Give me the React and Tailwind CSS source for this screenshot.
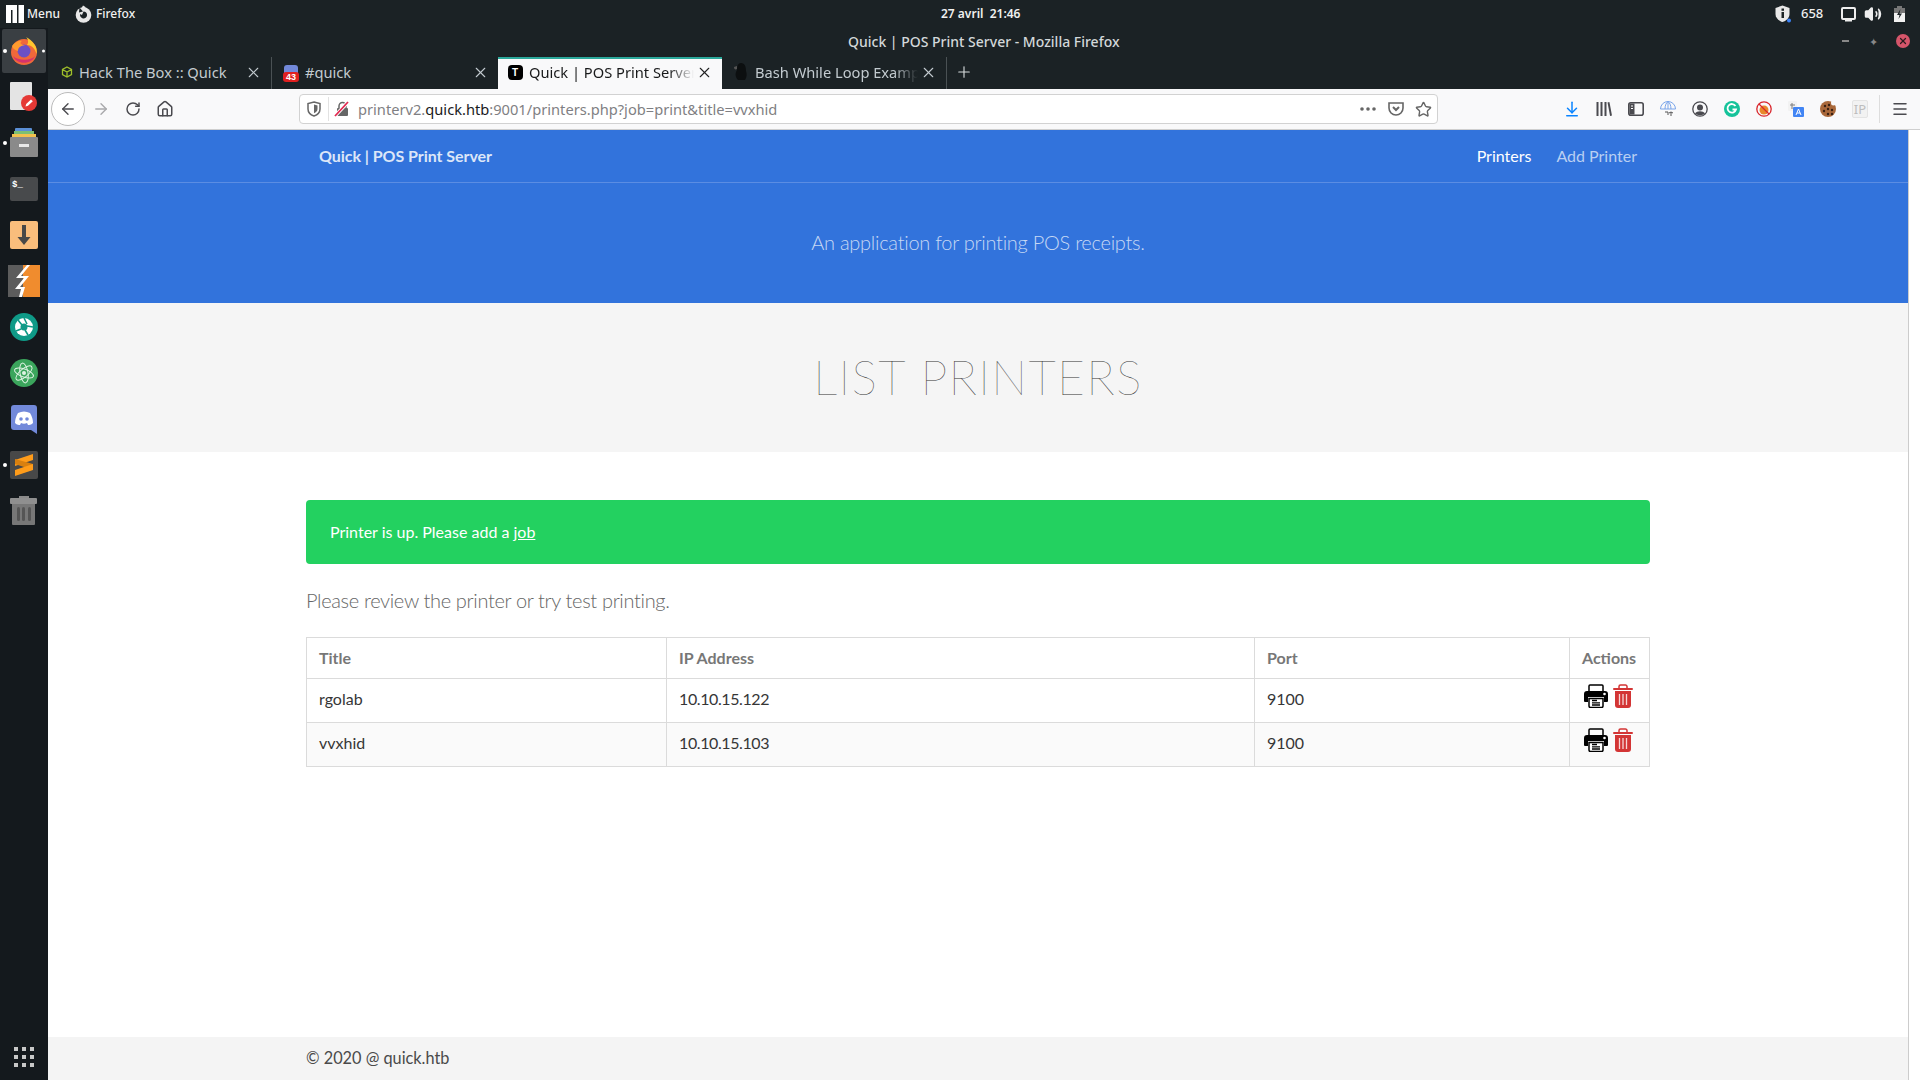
import React from 'react';
import { ArrowLeft, ArrowRight, RotateCw, Home, Star, X, Plus, Menu as MenuIcon, Volume2, ArrowDownToLine } from 'lucide-react';

// ---- desktop panel icons ----
const ManjaroLogo = () => (
  <svg width="18" height="18" viewBox="0 0 18 18" fill="#fff">
    <rect x="0" y="0" width="11" height="18" />
    <rect x="5" y="5" width="1.5" height="13" fill="#1b2225" />
    <rect x="11" y="0" width="1.5" height="18" fill="#1b2225" />
    <rect x="12.5" y="0" width="5.5" height="18" />
  </svg>
);

const FirefoxMono = () => (
  <svg width="17" height="18" viewBox="0 0 17 18">
    <circle cx="8.5" cy="10" r="7.8" fill="#e8e8e8" />
    <path d="M8 0.500 C12 2 11 5 9 6.500 L6 4 Z" fill="#e8e8e8" />
    <path d="M8.500 6.500 A3.500 3.500 0 1 1 5.200 9 L7 10 Z" fill="#1b2225" />
    <path d="M4.500 2.500 L8 6.500 L4 7.500 Z" fill="#1b2225" />
  </svg>
);

const ShieldInfo = () => (
  <svg width="16" height="18" viewBox="0 0 16 18">
    <path d="M7.500 0.500 L14.500 3 V9 C14.500 13 11 16 7.500 17 C4 16 0.500 13 0.500 9 V3 Z" fill="#e8e8e8" />
    <rect x="6.500" y="7" width="2.500" height="6" fill="#1b2225" />
    <rect x="6.500" y="3.500" width="2.500" height="2.300" fill="#1b2225" />
    <circle cx="14" cy="15.500" r="2" fill="#3b82f6" />
  </svg>
);

const MonitorIcon = () => (
  <svg width="15" height="15" viewBox="0 0 15 15" fill="none">
    <rect x="1" y="1" width="13" height="11" rx="1" stroke="#eee" strokeWidth="2" />
    <rect x="4" y="12.500" width="7" height="2" fill="#eee" />
  </svg>
);

const BatteryIcon = () => (
  <svg width="11" height="16" viewBox="0 0 11 16">
    <rect x="3" y="0" width="5" height="2" fill="#777" />
    <rect x="0" y="2" width="11" height="5" fill="#777" />
    <rect x="0" y="7" width="11" height="9" fill="#f2f2f2" />
    <path d="M6.500 3 L3 9 H5.500 L4.500 13 L8 7.500 H5.500 Z" fill="#1b2225" />
  </svg>
);

// ---- dock icons ----
const FirefoxDock = () => (
  <svg width="30" height="30" viewBox="0 0 30 30">
    <circle cx="15" cy="16" r="13" fill="#f0683a" />
    <path d="M4 20 C7 29 23 29 26 20 C22 25 9 25 4 20 Z" fill="#d6336c" />
    <path d="M17 1 C24 5 29 11 27.500 18 C26 12 22 9 18 9 C20 6 19 3 17 1 Z" fill="#ffc62e" />
    <circle cx="15" cy="15" r="6.500" fill="#6c50c4" />
    <path d="M3 10 C6 6 10 4 13 5 C10 7 12 9 16 9 C12 10 9 11 9 15 C6 14 4 13 3 10 Z" fill="#ff9b2e" />
  </svg>
);

const GeditIcon = () => (
  <svg width="28" height="30" viewBox="0 0 28 30">
    <rect x="0" y="0" width="22" height="28" rx="1" fill="#e4e4e4" />
    <circle cx="19" cy="21" r="8" fill="#e53935" />
    <path d="M15.500 24.500 L16.200 22 L21 17.500 L22.800 19.300 L18 23.800 Z" fill="#fff" />
  </svg>
);

const DrawerIcon = () => (
  <svg width="28" height="30" viewBox="0 0 28 30">
    <rect x="5" y="0" width="17" height="4" rx="1" fill="#5b8fd6" />
    <rect x="4" y="3" width="20" height="3" fill="#7cbf73" />
    <rect x="2" y="6" width="24" height="3" fill="#f2c14e" />
    <rect x="0" y="9" width="28" height="20" rx="1" fill="#8a8a8a" />
    <rect x="9" y="16" width="10" height="3" fill="#e8e8e8" />
  </svg>
);

const TerminalIcon = () => (
  <div className="w-[28px] h-[24px] rounded-[2px] bg-[#484a4c] pl-[2px] font-['Liberation_Mono',monospace] text-[9px] font-bold leading-[16px] text-white">$_</div>
);

const DownloadBox = () => (
  <div className="flex h-[28px] w-[28px] items-center justify-center rounded-[2px] bg-[#f9bd7c]">
    <svg width="14" height="22" viewBox="0 0 14 22"><path d="M5 1 H9 V13 H13.500 L7 21 L0.500 13 H5 Z" fill="#484848" /></svg>
  </div>
);

const BoltIcon = () => (
  <svg width="32" height="32" viewBox="0 0 32 32">
    <rect x="0" y="0" width="17" height="32" fill="#5c5c5c" />
    <rect x="15" y="0" width="17" height="32" fill="#f08c2e" />
    <path d="M19 0 L8 13 H16 L7 24 H13 L11 32 H14 L17 22 H12 L21 11 H13 L22 0 Z" fill="#fff" />
  </svg>
);

const ShutterIcon = () => (
  <svg width="28" height="28" viewBox="0 0 28 28">
    <circle cx="14" cy="14" r="14" fill="#0f9a87" />
    <circle cx="14" cy="14" r="9" fill="#fff" />
    <circle cx="14" cy="14" r="3.500" fill="#0f9a87" />
    <path d="M14 5 L17 11 M23 14 L17 13 M18 22 L15 17 M6 18 L11 16 M8 7 L12 12" stroke="#0f9a87" strokeWidth="1.600" />
  </svg>
);

const AtomIcon = () => (
  <svg width="28" height="28" viewBox="0 0 28 28" fill="none">
    <circle cx="14" cy="14" r="14" fill="#3ba55c" />
    <g stroke="#dff2e3" strokeWidth="1">
      <ellipse cx="14" cy="14" rx="10" ry="4" transform="rotate(20 14 14)" />
      <ellipse cx="14" cy="14" rx="10" ry="4" transform="rotate(80 14 14)" />
      <ellipse cx="14" cy="14" rx="10" ry="4" transform="rotate(140 14 14)" />
    </g>
    <circle cx="14" cy="14" r="2" fill="#dff2e3" />
  </svg>
);

const DiscordIcon = () => (
  <svg width="26" height="29" viewBox="0 0 26 29">
    <path d="M3 0 H23 A3 3 0 0 1 26 3 V29 L20 25 H3 A3 3 0 0 1 0 22 V3 A3 3 0 0 1 3 0 Z" fill="#7289da" />
    <path d="M7 8 C11 6 15 6 19 8 C21 11 22 15 22 18 C20 20 18 20 17 20 L16 18 C14 19 12 19 10 18 L9 20 C8 20 6 20 4 18 C4 15 5 11 7 8 Z" fill="#fff" />
    <circle cx="10" cy="14" r="1.800" fill="#7289da" />
    <circle cx="16" cy="14" r="1.800" fill="#7289da" />
  </svg>
);

const SublimeIcon = () => (
  <div className="flex h-[28px] w-[28px] items-center justify-center rounded-[2px] bg-[#484848]">
    <svg width="18" height="22" viewBox="0 0 18 22">
      <path d="M18 0 V6 L0 12 V6 Z" fill="#ff9c1a" />
      <path d="M0 10 L18 16 V10 L0 5 Z" fill="#d9800f" />
      <path d="M18 10 V16 L0 22 V16 Z" fill="#ff9c1a" />
    </svg>
  </div>
);

const TrashDock = () => (
  <svg width="28" height="30" viewBox="0 0 28 30">
    <rect x="9" y="0" width="10" height="3" fill="#8a8a8a" />
    <rect x="0" y="2" width="27" height="6" rx="1" fill="#8f8f8f" />
    <path d="M2 8 H25 V28 A1 1 0 0 1 24 29 H3 A1 1 0 0 1 2 28 Z" fill="#777" />
    <rect x="7" y="11" width="3" height="14" rx="1.500" fill="#555" />
    <rect x="12" y="11" width="3" height="14" rx="1.500" fill="#555" />
    <rect x="18" y="11" width="3" height="14" rx="1.500" fill="#555" />
  </svg>
);

const AppsGrid = () => (
  <svg width="20" height="20" viewBox="0 0 20 20" fill="#c8c8c8">
    {[0, 8, 16].map((y) => [0, 8, 16].map((x) => <rect key={`${x}-${y}`} x={x} y={y} width="4" height="4" />))}
  </svg>
);

// ---- tab favicons ----
const HtbFavicon = () => (
  <svg width="12" height="12" viewBox="0 0 12 12" fill="none" stroke="#9fbf2a" strokeWidth="1.300">
    <path d="M6 1 L10.500 3.500 V8.500 L6 11 L1.500 8.500 V3.500 Z M6 6 V11 M1.500 3.500 L6 6 L10.500 3.500" />
  </svg>
);

const DiscordFavicon = () => (
  <div className="relative h-[15px] w-[14px] rounded-[3px] bg-[#7289da]">
    <div className="absolute bottom-[-2px] left-[-1px] h-[10px] w-[16px] rounded-[3px] bg-[#e02020] text-center font-['Liberation_Sans',sans-serif] text-[9px] font-bold leading-[10px] text-white">43</div>
  </div>
);

const TFavicon = () => (
  <div className="flex h-[15px] w-[15px] items-center justify-center rounded-[4px] bg-black font-['Liberation_Sans',sans-serif] text-[10px] font-bold text-white">T</div>
);

const PenguinFavicon = () => (
  <svg width="14" height="18" viewBox="0 0 14 18">
    <path d="M7 0 C11 0 12 4 12 8 C13 11 13 14 11 17 H4 C1 14 1 10 3 7 C3 3 4 0 7 0 Z" fill="#0c0f10" />
    <path d="M3 6 C1 7 0 6 0 4 L3 3 Z" fill="#555" />
  </svg>
);

// ---- toolbar icons ----
const ShieldOutline = () => (
  <svg width="14" height="16" viewBox="0 0 14 16" fill="none">
    <path d="M7 1 L13 2.500 V8 C13 11.500 10 14 7 15 C4 14 1 11.500 1 8 V2.500 Z" stroke="#666" strokeWidth="1.500" />
    <path d="M7 3.500 L10.500 4.500 V8 C10.500 10 9 11.500 7 12.300 Z" fill="#666" />
  </svg>
);

const InsecureLock = () => (
  <svg width="16" height="16" viewBox="0 0 16 16">
    <rect x="3" y="7" width="11" height="8" rx="1" fill="#666" />
    <path d="M5 7 V5 A3.500 3.500 0 0 1 12 5 V7" fill="none" stroke="#666" strokeWidth="1.500" />
    <path d="M1 15 L14 1" stroke="#fff" strokeWidth="3.500" />
    <path d="M1 15 L14 1" stroke="#e22850" strokeWidth="1.800" />
  </svg>
);

const PocketIcon = () => (
  <svg width="16" height="16" viewBox="0 0 16 16" fill="none" stroke="#666" strokeWidth="1.600">
    <path d="M1 2 H15 V7 A7 7 0 0 1 1 7 Z" />
    <path d="M5 6 L8 9 L11 6" strokeWidth="2" />
  </svg>
);

const DotsIcon = () => (
  <svg width="16" height="4" viewBox="0 0 16 4" fill="#666">
    <circle cx="2" cy="2" r="1.800" /><circle cx="8" cy="2" r="1.800" /><circle cx="14" cy="2" r="1.800" />
  </svg>
);

const LibraryIcon = () => (
  <svg width="16" height="16" viewBox="0 0 16 16" fill="#4a4a4f">
    <rect x="0.500" y="1" width="2" height="14" /><rect x="4.500" y="1" width="2" height="14" /><rect x="8.500" y="1" width="2" height="14" />
    <path d="M11.500 1.500 L13.400 1 L16 14.500 L14.100 15 Z" />
  </svg>
);

const SidebarIcon = () => (
  <svg width="16" height="16" viewBox="0 0 16 16" fill="none" stroke="#4a4a4f" strokeWidth="1.600">
    <rect x="0.800" y="1.800" width="14.400" height="12.400" rx="2" />
    <rect x="1.500" y="2.500" width="5" height="11" fill="#4a4a4f" stroke="none" />
    <path d="M3 5 H5 M3 7.500 H5" stroke="#fff" strokeWidth="1" />
  </svg>
);

const UmbrellaIcon = () => (
  <svg width="16" height="16" viewBox="0 0 16 16" fill="none" stroke="#7aa5ea" strokeWidth="1">
    <path d="M0.500 8 A7.500 7.500 0 0 1 15.500 8 Z M5 8 C5 4 6.500 1.500 8 0.500 C9.500 1.500 11 4 11 8 M8 .5 V8" />
    <path d="M5 11 H8 V14 M11 15 V11 M9 12 L11 11 L13 12" stroke="#555" />
  </svg>
);

const AccountIcon = () => (
  <svg width="16" height="16" viewBox="0 0 16 16" fill="none">
    <circle cx="8" cy="8" r="7.200" stroke="#4a4a4f" strokeWidth="1.300" />
    <circle cx="8" cy="6.500" r="3" fill="#4a4a4f" />
    <path d="M3 12.500 C5 9.500 11 9.500 13 12.500 C11 14.800 5 14.800 3 12.500 Z" fill="#4a4a4f" />
  </svg>
);

const GrammarlyIcon = () => (
  <svg width="16" height="16" viewBox="0 0 16 16" fill="none">
    <circle cx="8" cy="8" r="8" fill="#15c39a" />
    <path d="M11.500 5 A4.300 4.300 0 1 0 12 8.500 H8.500" stroke="#fff" strokeWidth="1.800" />
  </svg>
);

const BlockedIcon = () => (
  <svg width="16" height="16" viewBox="0 0 16 16" fill="none">
    <circle cx="8" cy="9" r="4.500" fill="#e8892b" />
    <circle cx="8" cy="8" r="7.200" stroke="#d9262c" strokeWidth="1.300" />
    <path d="M3 3 L13 13" stroke="#d9262c" strokeWidth="1.300" />
  </svg>
);

const TranslateIcon = () => (
  <svg width="16" height="16" viewBox="0 0 16 16">
    <rect x="0" y="0" width="9" height="10" rx="1" fill="#f2f2f2" />
    <path d="M4 2 V8 M2 4 H7" stroke="#7a7a7a" strokeWidth="1" />
    <rect x="5" y="6" width="11" height="10" rx="1" fill="#4285f4" />
    <path d="M8 14 L10.500 8 L13 14 M9 12 H12" stroke="#fff" strokeWidth="1" fill="none" />
  </svg>
);

const CookieIcon = () => (
  <svg width="16" height="16" viewBox="0 0 16 16">
    <circle cx="8" cy="8" r="8" fill="#a9683a" />
    <circle cx="13.500" cy="2" r="2.500" fill="#f9f9fa" />
    {[[5, 5], [9, 4], [4, 10], [8, 8], [12, 9], [8, 13], [12, 13]].map(([x, y]) => (
      <circle key={`${x}${y}`} cx={x} cy={y} r="1.200" fill="#3a2113" />
    ))}
  </svg>
);

const IpIcon = () => (
  <div className="flex h-[18px] w-[16px] items-center justify-center rounded-[2px] border border-[#e4e4e4] bg-[#f2f2f2] font-['Noto_Sans',sans-serif] text-[13px] leading-none text-[#bdbdbd]">IP</div>
);

const ToolButton = ({ children, className = 'w-[32px]' }) => (
  <div className={`flex h-full shrink-0 items-center justify-center ${className}`}>{children}</div>
);

// ---- page icons ----
const PrinterIcon = () => (
  <svg width="24" height="24" viewBox="0 0 24 24">
    <path d="M5 7 V2 A1 1 0 0 1 6 1 H18 A1 1 0 0 1 19 2 V7" fill="none" stroke="#000" strokeWidth="1.500" />
    <path d="M3 7 H21 A3 3 0 0 1 24 10 V17 A1 1 0 0 1 23 18 H20 V13 H4 V18 H1 A1 1 0 0 1 0 17 V10 A3 3 0 0 1 3 7 Z" fill="#000" />
    <circle cx="20.500" cy="10" r="1.300" fill="#fff" />
    <path d="M5 14.500 H19 V22 A1.500 1.500 0 0 1 17.500 23.500 H6.500 A1.500 1.500 0 0 1 5 22 Z" fill="#fff" stroke="#000" strokeWidth="1.500" />
    <path d="M8 16.500 H13 M8 18.800 H16 M8 21 H16" stroke="#000" strokeWidth="1.300" />
  </svg>
);

const TrashIcon = () => (
  <svg width="20" height="24" viewBox="0 0 20 24">
    <path d="M6 4 V2.500 A1.500 1.500 0 0 1 7.500 1 H12.500 A1.500 1.500 0 0 1 14 2.500 V4" fill="none" stroke="#d33535" strokeWidth="1.500" />
    <rect x="0" y="4" width="20" height="2" rx="1" fill="#d33535" />
    <path d="M2 7 H18 V21 A3 3 0 0 1 15 24 H5 A3 3 0 0 1 2 21 Z" fill="#d33535" />
    <path d="M6.500 10 V21 M10 10 V21 M13.500 10 V21" stroke="#fff" strokeOpacity="0.800" strokeWidth="1.300" />
  </svg>
);

const tabs = [
  { title: 'Hack The Box :: Quick', icon: <HtbFavicon />, w: 'w-[224px]', pad: 'pl-[11px]', iconGap: 'mr-[4px]', sep: true },
  { title: '#quick', icon: <DiscordFavicon />, w: 'w-[226px]', pad: 'pl-[11px]', iconGap: 'mr-[6px]' },
  { title: 'Quick | POS Print Server', icon: <TFavicon />, w: 'w-[224px]', pad: 'pl-[9px]', iconGap: 'mr-[6px]', active: true, fade: true },
  { title: 'Bash While Loop Examples', icon: <PenguinFavicon />, w: 'w-[225px]', pad: 'pl-[11px]', iconGap: 'mr-[6px]', sep: true, fade: true },
];

const Tab = ({ title, icon, w, pad, iconGap, active, sep, fade }) => (
  <div className={`flex h-full shrink-0 items-center pr-[9px] ${pad} ${w} ${active ? 'border-t-2 border-[#2ba89b] bg-[#f9f9fa] pb-[4px] text-[#18191a]' : 'pb-[2px] text-[#c3cbd0]'} ${sep ? 'border-r border-r-[#4a5154]' : ''}`}>
    <div className={`flex h-[18px] w-[16px] shrink-0 items-center justify-center ${iconGap}`}>{icon}</div>
    <div className={`min-w-0 flex-1 overflow-hidden whitespace-nowrap text-[14.67px] ${fade ? '[mask-image:linear-gradient(to_right,black_85%,transparent)]' : ''}`}>{title}</div>
    <X size={17} strokeWidth={1.5} className={`ml-[2px] shrink-0 ${active ? 'text-[#222]' : 'text-[#c3cbd0]'}`} />
  </div>
);

const DockItem = ({ children, active, dot }) => (
  <div className="relative flex h-[46px] w-full shrink-0 items-center justify-center">
    {active && <div className="absolute inset-x-[2px] inset-y-[1px] rounded-[2px] bg-[#3a3f43]" />}
    {dot && <div className="absolute left-[3px] top-1/2 h-[4px] w-[4px] -translate-y-1/2 rounded-full bg-white" />}
    {active && <div className="absolute right-[3px] top-1/2 h-[3px] w-[3px] -translate-y-1/2 rounded-full bg-white" />}
    <div className="relative">{children}</div>
  </div>
);

const printers = [
  { title: 'rgolab', ip: '10.10.15.122', port: '9100' },
  { title: 'vvxhid', ip: '10.10.15.103', port: '9100' },
];

export default function App() {
  return (
    <div className="flex h-screen w-full flex-col overflow-hidden bg-[#1b2225] font-['Noto_Sans',sans-serif]">
      {/* desktop panel */}
      <div className="relative flex h-[28px] shrink-0 items-center text-[12px] font-medium text-[#f0f0f0]">
        <div className="ml-[6px]"><ManjaroLogo /></div>
        <span className="ml-[3px]">Menu</span>
        <div className="ml-[15px]"><FirefoxMono /></div>
        <span className="ml-[4px]">Firefox</span>
        <span className="absolute left-[941px] top-[5px] font-semibold whitespace-pre">27 avril  21:46</span>
        <div className="ml-auto flex items-center">
          <ShieldInfo />
          <span className="ml-[10px] w-[24px] text-[13px]">658</span>
          <div className="ml-[16px]"><MonitorIcon /></div>
          <Volume2 size={18} fill="#eee" strokeWidth={2} className="ml-[8px] text-[#eee]" />
          <div className="ml-[12px] mr-[15px]"><BatteryIcon /></div>
        </div>
      </div>

      <div className="flex min-h-0 flex-1">
        {/* dock */}
        <div className="flex w-[48px] shrink-0 flex-col bg-[#14191d]">
          <DockItem active dot><FirefoxDock /></DockItem>
          <DockItem><GeditIcon /></DockItem>
          <DockItem dot><DrawerIcon /></DockItem>
          <DockItem><TerminalIcon /></DockItem>
          <DockItem><DownloadBox /></DockItem>
          <DockItem><BoltIcon /></DockItem>
          <DockItem><ShutterIcon /></DockItem>
          <DockItem><AtomIcon /></DockItem>
          <DockItem><DiscordIcon /></DockItem>
          <DockItem dot><SublimeIcon /></DockItem>
          <DockItem><TrashDock /></DockItem>
          <div className="mt-auto flex justify-center pb-[13px]"><AppsGrid /></div>
        </div>

        {/* browser window */}
        <div className="flex min-w-0 flex-1 flex-col">
          <div className="relative flex h-[29px] shrink-0 items-center pb-[3px] text-[14px] font-medium text-[#d3d8da]">
            <span className="ml-[800px]">Quick | POS Print Server - Mozilla Firefox</span>
            <div className="ml-auto flex items-center">
              <div className="h-[1.500px] w-[7px] bg-[#888]" />
              <div className="ml-[20px] text-[11px] leading-none text-[#888]">✦</div>
              <div className="ml-[18px] mr-[10px] flex h-[14px] w-[14px] items-center justify-center rounded-full bg-[#d5556a]">
                <X size={10} strokeWidth={3} className="text-[#2a1a1e]" />
              </div>
            </div>
          </div>

          <div className="flex h-[32px] shrink-0 items-stretch">
            {tabs.map((t) => <Tab key={t.title} {...t} />)}
            <div className="ml-[8px] flex items-center pb-[2px]"><Plus size={18} strokeWidth={1.5} className="text-[#d8dcde]" /></div>
          </div>

          <div className="flex h-[41px] shrink-0 items-center border-b border-[#cfcfcf] bg-[#f9f9fa] pl-[3px] text-[#4a4a4f]">
            <div className="flex h-[34px] w-[34px] shrink-0 items-center justify-center rounded-full border border-[#bbb] bg-white">
              <ArrowLeft size={18} strokeWidth={1.800} />
            </div>
            <ToolButton><ArrowRight size={18} strokeWidth={1.800} className="text-[#a8a8aa]" /></ToolButton>
            <ToolButton><RotateCw size={16} strokeWidth={2.2} /></ToolButton>
            <ToolButton><Home size={18} strokeWidth={2} /></ToolButton>

            <div className="ml-[118px] flex h-[30px] w-[1139px] shrink-0 items-center rounded-[4px] border border-[#d2d2d2] bg-white">
              <div className="ml-[7px]"><ShieldOutline /></div>
              <div className="ml-[7px] h-[24px] w-px bg-[#e2e2e2]" />
              <div className="ml-[5px]"><InsecureLock /></div>
              <div className="ml-[8px] whitespace-nowrap text-[14.67px] text-[#7f7f83]">
                printerv2.<span className="text-[#1a1a1c]">quick.htb</span>:9001/printers.php?job=print&amp;title=vvxhid
              </div>
              <div className="ml-auto flex items-center">
                <DotsIcon />
                <div className="ml-[12px]"><PocketIcon /></div>
                <Star size={17} strokeWidth={2} className="ml-[11px] mr-[5px] text-[#666]" />
              </div>
            </div>

            <div className="ml-[118px] flex h-full items-center">
              <ToolButton><ArrowDownToLine size={18} strokeWidth={2} className="text-[#0a84ff]" /></ToolButton>
              <ToolButton><LibraryIcon /></ToolButton>
              <ToolButton><SidebarIcon /></ToolButton>
              <ToolButton><UmbrellaIcon /></ToolButton>
              <ToolButton><AccountIcon /></ToolButton>
              <ToolButton><GrammarlyIcon /></ToolButton>
              <ToolButton><BlockedIcon /></ToolButton>
              <ToolButton><TranslateIcon /></ToolButton>
              <ToolButton><CookieIcon /></ToolButton>
              <ToolButton><IpIcon /></ToolButton>
              <div className="ml-[3px] h-[28px] w-px bg-[#ddd]" />
              <ToolButton className="w-[40px]"><MenuIcon size={18} strokeWidth={2} /></ToolButton>
            </div>
          </div>

          {/* page */}
          <div className="flex min-h-0 flex-1 bg-white font-['Lato',sans-serif] text-[#4a4a4a]">
            <div className="flex min-w-0 flex-1 flex-col border-r border-[#cccccc]">
              <div className="h-[173px] shrink-0 bg-[#3273dc]">
                <div className="flex h-[53px] items-center border-b border-[#5b8de3]">
                  <div className="mx-auto flex w-[1344px] items-center px-[13px]">
                    <span className="text-[16px] font-bold tracking-[-0.05px] text-[#dce6f8]">Quick | POS Print Server</span>
                    <span className="ml-auto text-[16px] text-white">Printers</span>
                    <span className="ml-[25px] text-[16px] text-[#b9cff2]">Add Printer</span>
                  </div>
                </div>
                <div className="pt-[47px] text-center text-[20px] leading-[24px] font-light tracking-[-0.27px] text-[#c6d8f4]">An application for printing POS receipts.</div>
              </div>

              <div className="flex h-[149px] shrink-0 items-center justify-center bg-[#f5f5f5] pb-[2px]">
                <h1 className="text-[48px] leading-none font-thin tracking-[1.3px] text-[#363636]">LIST PRINTERS</h1>
              </div>

              <div className="mx-auto w-[1344px] flex-1 pt-[48px]">
                <div className="flex h-[64px] items-center rounded-[4px] bg-[#23d160] pl-[24px] text-[16px] text-white">
                  <span>Printer is up. Please add a <span className="underline">job</span></span>
                </div>
                <p className="mt-[23px] text-[20px] leading-[26px] font-light tracking-[-0.34px] text-[#666]">Please review the printer or try test printing.</p>
                <table className="mt-[24px] w-[1343px] table-fixed border-collapse border border-[#dbdbdb] text-[16px]">
                  <colgroup>
                    <col className="w-[360px]" />
                    <col className="w-[588px]" />
                    <col className="w-[315px]" />
                    <col className="w-[80px]" />
                  </colgroup>
                  <thead>
                    <tr className="h-[41px]">
                      <th className="border border-[#dbdbdb] px-[12px] pb-[1px] text-left font-bold text-[#777]">Title</th>
                      <th className="border border-[#dbdbdb] px-[12px] pb-[1px] text-left font-bold text-[#777]">IP Address</th>
                      <th className="border border-[#dbdbdb] px-[12px] pb-[1px] text-left font-bold text-[#777]">Port</th>
                      <th className="border border-[#dbdbdb] px-[12px] pb-[1px] text-left font-bold text-[#777]">Actions</th>
                    </tr>
                  </thead>
                  <tbody>
                    {printers.map((p, i) => (
                      <tr key={p.title} className={`h-[44px] ${i % 2 === 1 ? 'bg-[#fafafa]' : ''}`}>
                        <td className="border border-[#dbdbdb] px-[12px] pb-[3px] text-[#363636]">{p.title}</td>
                        <td className="border border-[#dbdbdb] px-[12px] pb-[3px] tracking-[-0.4px] text-[#363636]">{p.ip}</td>
                        <td className="border border-[#dbdbdb] px-[12px] pb-[3px] text-[#363636]">{p.port}</td>
                        <td className="border border-[#dbdbdb] px-[14px] pt-[5px] align-top">
                          <div className="flex gap-[5px]"><PrinterIcon /><TrashIcon /></div>
                        </td>
                      </tr>
                    ))}
                  </tbody>
                </table>
              </div>

              <div className="h-[43px] shrink-0 bg-[#f4f4f4]">
                <div className="mx-auto flex h-full w-[1344px] items-center pb-[1px] text-[16.3px]">© 2020 @ quick.htb</div>
              </div>
            </div>
            <div className="w-[11px] shrink-0 bg-white" />
          </div>
        </div>
      </div>
    </div>
  );
}
